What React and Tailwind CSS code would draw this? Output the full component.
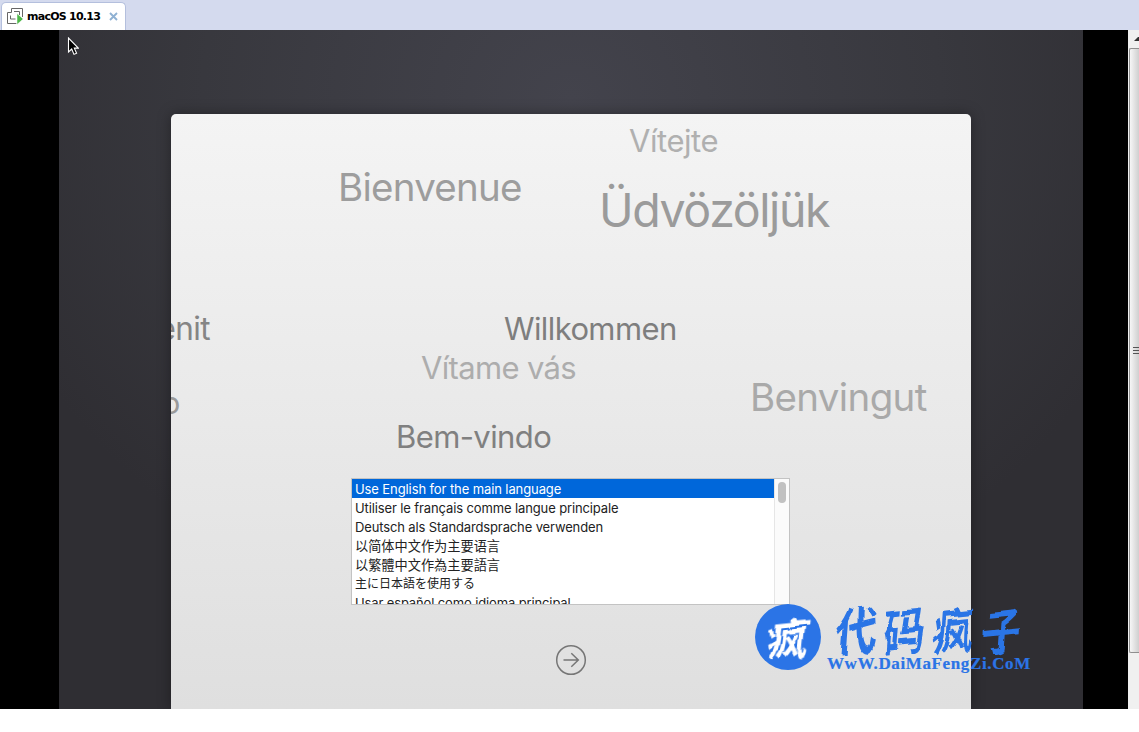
const greetings = [
  { text: 'Vítejte', cls: 'left-[458px] top-[11px] text-[31px] tracking-[-0.45px] text-[#b0b0b0]' },
  { text: 'Bienvenue', cls: 'left-[167px] top-[54px] text-[38.5px] tracking-[-0.75px] text-[#9d9d9d]' },
  { text: 'Üdvözöljük', cls: 'left-[428px] top-[73px] text-[46.5px] tracking-[-1.4px] text-[#9b9b9b]' },
  { text: 'Benvenit', cls: 'right-[761px] top-[199px] text-[31.5px] tracking-[-0.6px] text-[#858585]' },
  { text: 'Willkommen', cls: 'left-[333px] top-[199px] text-[31px] tracking-[-0.6px] text-[#7e7e7e]' },
  { text: 'Vítame vás', cls: 'left-[250px] top-[238px] text-[31px] tracking-[-0.65px] text-[#adadad]' },
  { text: 'Benvingut', cls: 'left-[579px] top-[264px] text-[38.5px] tracking-[-0.65px] text-[#a9a9a9]' },
  { text: 'Benvenuto', cls: 'right-[791px] top-[273px] text-[31px] tracking-[-0.3px] text-[#9a9a9a]' },
  { text: 'Bem-vindo', cls: 'left-[225px] top-[307px] text-[31px] tracking-[-0.6px] text-[#808080]' },
];

const languages = [
  { text: 'Use English for the main language', cls: 'bg-[#0067da] text-white tracking-[-0.1px]' },
  { text: 'Utiliser le français comme langue principale', cls: 'text-[#222] tracking-[-0.12px]' },
  { text: 'Deutsch als Standardsprache verwenden', cls: 'text-[#222] tracking-[-0.13px]' },
  { text: '以简体中文作为主要语言', cls: 'text-[#222] text-[13.2px]' },
  { text: '以繁體中文作為主要語言', cls: 'text-[#222] text-[13.2px]' },
  { text: '主に日本語を使用する', cls: 'text-[#222] text-[12px]' },
  { text: 'Usar español como idioma principal', cls: 'text-[#222] tracking-[-0.13px]' },
];

function VmIcon() {
  return (
    <svg className="h-[17px] w-[17px]" viewBox="0 0 17 17" fill="none" stroke="#666" strokeWidth="1">
      <path d="M4.500 4.500v-4h11v8.500" />
      <path d="M4.500 4.500h-4v11h9" />
      <path d="M7 3.500h5.500v3.500M3.500 7.500v3.500h5" />
      <path d="M10 5.500l6.200 5.500-6.200 5.500z" fill="#4db848" stroke="#fff" strokeWidth="0.5" />
    </svg>
  );
}

function TabBar() {
  return (
    <header className="flex h-[30px] items-end bg-[#d4daee]">
      <div className="ml-px flex h-[28px] w-[125px] items-center rounded-t-[5px] border border-b-0 border-[#b4bfdd] bg-white pl-[5px]">
        <VmIcon />
        <span className="ml-[3px] w-[77px] whitespace-nowrap pt-[2px] font-['DejaVu_Sans',sans-serif] text-[11px] font-bold tracking-[-0.75px] text-black">
          macOS 10.13
        </span>
        <svg className="ml-[5px] h-[9px] w-[9px]" viewBox="0 0 9 9" stroke="#8fb1d3" strokeWidth="1.9">
          <path d="M1 1l7 7M8 1l-7 7" />
        </svg>
      </div>
    </header>
  );
}

function LanguageList() {
  return (
    <div className="flex h-[127px] w-[439px] overflow-hidden border border-[#c3c3c3] bg-white">
      <ul className="flex-1 text-[13px]">
        {languages.map((l) => (
          <li key={l.text} className={`h-[19px] whitespace-nowrap pl-[3px] leading-[20px] ${l.cls}`}>
            {l.text}
          </li>
        ))}
      </ul>
      <div className="flex w-[15px] justify-center border-l border-[#e6e6e6] bg-[#fbfbfb] pt-[3px]">
        <div className="h-[21px] w-[8px] rounded-full bg-[#c1c1c1]" />
      </div>
    </div>
  );
}

function Card() {
  return (
    <section className="relative flex h-[595px] w-[800px] flex-col overflow-hidden rounded-t-[5px] bg-linear-to-b from-[#f4f4f4] to-[#dfdfdf] pl-[180px] pt-[364px] shadow-[0_0_14px_rgba(0,0,0,0.35)]">
      {greetings.map((g) => (
        <span key={g.text} className={`absolute whitespace-nowrap leading-none ${g.cls}`}>
          {g.text}
        </span>
      ))}
      <LanguageList />
      <svg className="ml-[204px] mt-[39px] h-[32px] w-[32px]" viewBox="0 0 32 32" fill="none" stroke="#767676" strokeWidth="1.5">
        <circle cx="16" cy="16" r="14.3" />
        <path d="M8.500 16h14.500M16.300 9.200l7 6.800-7 6.800" />
      </svg>
    </section>
  );
}

function Watermark() {
  return (
    <div className="absolute left-[755px] top-[604px] flex text-[#2b74e6]">
      <svg className="absolute h-0 w-0">
        <filter id="brush" x="-10%" y="-10%" width="120%" height="120%">
          <feTurbulence type="fractalNoise" baseFrequency="0.05" numOctaves="1" seed="4" />
          <feDisplacementMap in="SourceGraphic" scale="9" xChannelSelector="R" yChannelSelector="G" />
        </filter>
      </svg>
      <div className="flex h-[66px] w-[66px] items-center justify-center rounded-full bg-[#2b74e6]">
        <span className="-rotate-6 -skew-x-12 font-['Noto_Sans_CJK_SC',sans-serif] text-[41px] font-bold leading-none text-white [filter:url(#brush)]">疯</span>
      </div>
      <div className="ml-[6px] flex w-[205px] flex-col">
        <div className="flex h-[50px] items-center justify-between pl-[8px] pr-[9px] font-['Noto_Sans_CJK_SC',sans-serif] text-[41px] font-bold leading-none [filter:url(#brush)]">
          <span className="-translate-y-px -rotate-6 -skew-x-12 scale-y-120">代</span>
          <span className="-translate-y-px -rotate-6 -skew-x-12 scale-y-120">码</span>
          <span className="-translate-y-px -rotate-6 -skew-x-12 scale-y-120">疯</span>
          <span className="-translate-y-px -rotate-6 -skew-x-12 scale-y-120">子</span>
        </div>
        <span className="whitespace-nowrap font-['Liberation_Serif',serif] text-[17px] font-bold leading-[19px] tracking-[0.62px] [-webkit-text-stroke:0.2px_#2b74e6]">
          WwW.DaiMaFengZi.CoM
        </span>
      </div>
    </div>
  );
}

function WindowScrollbar() {
  return (
    <div className="flex w-[11px] flex-col overflow-hidden bg-[#f0f0f0]">
      <div className="flex h-[18px] items-center justify-end">
        <svg className="h-[5px] w-[5px]" viewBox="0 0 5 5">
          <path d="M0 4L4 0h1v4z" fill="#333" />
        </svg>
      </div>
      <div className="ml-px flex h-[605px] items-center justify-end rounded-l-[2px] border border-r-0 border-[#8f8f8f] bg-linear-to-r from-[#f6f6f6] to-[#cfcfcf]">
        <div className="flex w-[6px] flex-col gap-[2px]">
          <i className="h-px bg-[#555]" />
          <i className="h-px bg-[#555]" />
          <i className="h-px bg-[#555]" />
        </div>
      </div>
    </div>
  );
}

export default function App() {
  return (
    <div className="relative h-[732px] w-[1139px] overflow-hidden bg-white font-['Inter','Noto_Sans_CJK_SC',sans-serif]">
      <TabBar />
      <main className="flex h-[679px]">
        <div className="flex flex-1 justify-start bg-black pl-[59px]">
          <div className="flex w-[1024px] justify-center overflow-hidden bg-[radial-gradient(ellipse_60%_80%_at_50%_10%,#43434c_0%,#38383e_60%,#2f2e33_100%)] pt-[84px]">
            <Card />
          </div>
        </div>
        <WindowScrollbar />
      </main>
      <svg className="absolute left-[67px] top-[37px] h-[19px] w-[12px]" viewBox="0 0 12 19">
        <path d="M1.500 1v14l3.200-3 2.300 5.400 2.600-1.100-2.300-5.200h4z" fill="#000" stroke="#fff" strokeWidth="1.1" />
      </svg>
      <Watermark />
    </div>
  );
}
